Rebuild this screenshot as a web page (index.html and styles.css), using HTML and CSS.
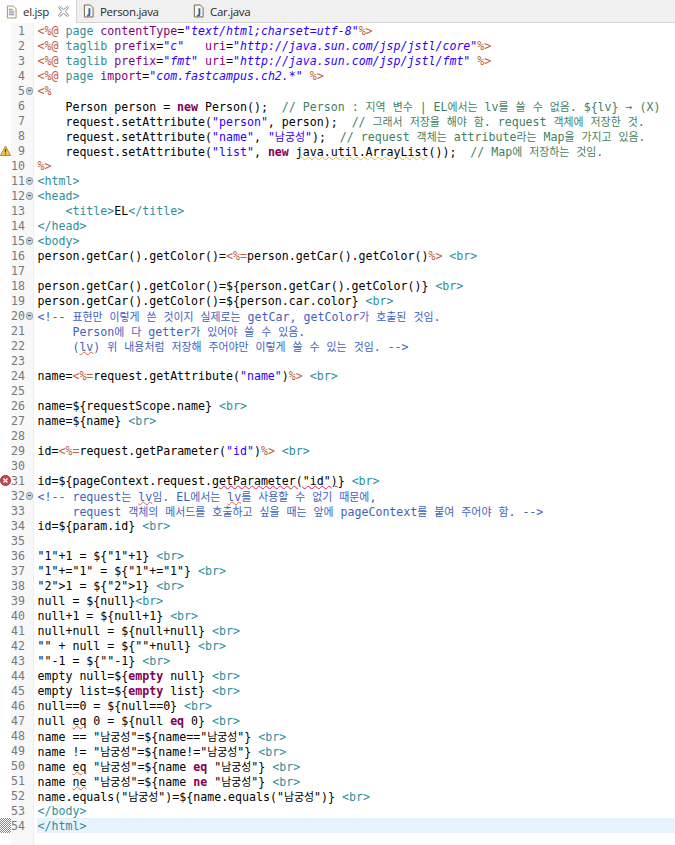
FILE: index.html
```html
<!DOCTYPE html>
<html lang="ko">
<head>
<meta charset="utf-8">
<title>el.jsp</title>
<link rel="stylesheet" href="styles.css">
</head>
<body>
<nav class="tabs">
  <div class="tab active">
    <svg class="ficon" width="11" height="14" viewBox="0 0 12 14"><path d="M1.500 .5h6.500l3 3v10h-9.500z" fill="#fff" stroke="#a58a5c"/><path d="M3 4h4" stroke="#5a7fb5"/><path d="M3 6h6" stroke="#d0694a"/><path d="M3 8h6" stroke="#4f9c6b"/><path d="M3 10h6" stroke="#8a6bb5"/></svg>
    <span class="tname">el.jsp</span>
    <svg class="close" width="11" height="11" viewBox="0 0 11 11"><path d="M1.500 .5l4 3 4-3 1 1-3 4 3 4-1 1-4-3-4 3-1-1 3-4-3-4z" fill="#fff" stroke="#8a8a8a"/></svg>
  </div>
  <div class="tab">
    <svg class="ficon" width="11" height="14" viewBox="0 0 12 14"><path d="M1.500 .5h6.500l3 3v10h-9.500z" fill="#f8f8f0" stroke="#6a5f45"/><path d="M7 4v6.500q0 1.500-1.500 1.500h-1" fill="none" stroke="#2a5fb0" stroke-width="2"/></svg>
    <span class="tname">Person.java</span>
  </div>
  <div class="tab">
    <svg class="ficon" width="11" height="14" viewBox="0 0 12 14"><path d="M1.500 .5h6.500l3 3v10h-9.500z" fill="#f8f8f0" stroke="#6a5f45"/><path d="M7 4v6.500q0 1.500-1.500 1.500h-1" fill="none" stroke="#2a5fb0" stroke-width="2"/></svg>
    <span class="tname">Car.java</span>
  </div>
</nav>
<main class="editor">
<div class="row"><i class="mark"></i><i class="num">1</i><i class="fcol"></i><code class="code"><span class="j">&lt;%@</span> <span class="t">page</span> <span class="a">contentType</span>=<span class="s">"text/html;charset=utf-8"</span><span class="j">%&gt;</span></code></div>
<div class="row"><i class="mark"></i><i class="num">2</i><i class="fcol"></i><code class="code"><span class="j">&lt;%@</span> <span class="t">taglib</span> <span class="a">prefix</span>=<span class="s">"c"</span>   <span class="a">uri</span>=<span class="s">"http://java.sun.com/jsp/jstl/core"</span><span class="j">%&gt;</span></code></div>
<div class="row"><i class="mark"></i><i class="num">3</i><i class="fcol"></i><code class="code"><span class="j">&lt;%@</span> <span class="t">taglib</span> <span class="a">prefix</span>=<span class="s">"fmt"</span> <span class="a">uri</span>=<span class="s">"http://java.sun.com/jsp/jstl/fmt"</span> <span class="j">%&gt;</span></code></div>
<div class="row"><i class="mark"></i><i class="num">4</i><i class="fcol"></i><code class="code"><span class="j">&lt;%@</span> <span class="t">page</span> <span class="a">import</span>=<span class="s">"com.fastcampus.ch2.*"</span> <span class="j">%&gt;</span></code></div>
<div class="row"><i class="mark"></i><i class="num">5</i><i class="fcol"><b class="fold"></b></i><code class="code"><span class="j">&lt;%</span></code></div>
<div class="row"><i class="mark"></i><i class="num">6</i><i class="fcol"></i><code class="code">    Person person = <span class="k">new</span> Person();  <span class="c">// Person : <span class="q">지역</span> <span class="q">변수</span> | EL<span class="q">에서는</span> lv<span class="q">를</span> <span class="q">쓸</span> <span class="q">수</span> <span class="q">없음</span>. ${lv} → (X)</span></code></div>
<div class="row"><i class="mark"></i><i class="num">7</i><i class="fcol"></i><code class="code">    request.setAttribute(<span class="str">"person"</span>, person);  <span class="c">// <span class="q">그래서</span> <span class="q">저장을</span> <span class="q">해야</span> <span class="q">함</span>. request <span class="q">객체에</span> <span class="q">저장한</span> <span class="q">것</span>.</span></code></div>
<div class="row"><i class="mark"></i><i class="num">8</i><i class="fcol"></i><code class="code">    request.setAttribute(<span class="str">"name"</span>, <span class="str">"<span class="q">남궁성</span>"</span>);  <span class="c">// request <span class="q">객체는</span> attribute<span class="q">라는</span> Map<span class="q">을</span> <span class="q">가지고</span> <span class="q">있음</span>.</span></code></div>
<div class="row"><i class="mark"><svg width="11" height="12" viewBox="0 0 11 12"><path d="M5.500 1L10.500 10.500H.5z" fill="#f2c94f" stroke="#b08a30" stroke-linejoin="round"/><path d="M5.500 4v3.500M5.500 8.500v1" stroke="#5a4510" stroke-width="1.300"/></svg></i><i class="num">9</i><i class="fcol"></i><code class="code">    request.setAttribute(<span class="str">"list"</span>, <span class="k">new</span> <span class="warn">java.util.ArrayList</span>());  <span class="c">// Map<span class="q">에</span> <span class="q">저장하는</span> <span class="q">것임</span>.</span></code></div>
<div class="row"><i class="mark"></i><i class="num">10</i><i class="fcol"></i><code class="code"><span class="j">%&gt;</span></code></div>
<div class="row"><i class="mark"></i><i class="num">11</i><i class="fcol"><b class="fold"></b></i><code class="code"><span class="t">&lt;html&gt;</span></code></div>
<div class="row"><i class="mark"></i><i class="num">12</i><i class="fcol"><b class="fold"></b></i><code class="code"><span class="t">&lt;head&gt;</span></code></div>
<div class="row"><i class="mark"></i><i class="num">13</i><i class="fcol"></i><code class="code">    <span class="t">&lt;title&gt;</span>EL<span class="t">&lt;/title&gt;</span></code></div>
<div class="row"><i class="mark"></i><i class="num">14</i><i class="fcol"></i><code class="code"><span class="t">&lt;/head&gt;</span></code></div>
<div class="row"><i class="mark"></i><i class="num">15</i><i class="fcol"><b class="fold"></b></i><code class="code"><span class="t">&lt;body&gt;</span></code></div>
<div class="row"><i class="mark"></i><i class="num">16</i><i class="fcol"></i><code class="code">person.getCar().getColor()=<span class="j">&lt;%=</span>person.getCar().getColor()<span class="j">%&gt;</span> <span class="t">&lt;br&gt;</span></code></div>
<div class="row"><i class="mark"></i><i class="num">17</i><i class="fcol"></i><code class="code"></code></div>
<div class="row"><i class="mark"></i><i class="num">18</i><i class="fcol"></i><code class="code">person.getCar().getColor()=${person.getCar().getColor()} <span class="t">&lt;br&gt;</span></code></div>
<div class="row"><i class="mark"></i><i class="num">19</i><i class="fcol"></i><code class="code">person.getCar().getColor()=${person.car.color} <span class="t">&lt;br&gt;</span></code></div>
<div class="row"><i class="mark"></i><i class="num">20</i><i class="fcol"><b class="fold"></b></i><code class="code h">&lt;!-- <span class="q">표현만</span> <span class="q">이렇게</span> <span class="q">쓴</span> <span class="q">것이지</span> <span class="q">실제로는</span> getCar, getColor<span class="q">가</span> <span class="q">호출된</span> <span class="q">것임</span>.</code></div>
<div class="row"><i class="mark"></i><i class="num">21</i><i class="fcol"></i><code class="code h">     Person<span class="q">에</span> <span class="q">다</span> getter<span class="q">가</span> <span class="q">있어야</span> <span class="q">쓸</span> <span class="q">수</span> <span class="q">있음</span>.</code></div>
<div class="row"><i class="mark"></i><i class="num">22</i><i class="fcol"></i><code class="code h">     (<span class="sp">lv</span>) <span class="q">위</span> <span class="q">내용처럼</span> <span class="q">저장해</span> <span class="q">주어야만</span> <span class="q">이렇게</span> <span class="q">쓸</span> <span class="q">수</span> <span class="q">있는</span> <span class="q">것임</span>. --&gt;</code></div>
<div class="row"><i class="mark"></i><i class="num">23</i><i class="fcol"></i><code class="code"></code></div>
<div class="row"><i class="mark"></i><i class="num">24</i><i class="fcol"></i><code class="code">name=<span class="j">&lt;%=</span>request.getAttribute(<span class="str">"name"</span>)<span class="j">%&gt;</span> <span class="t">&lt;br&gt;</span></code></div>
<div class="row"><i class="mark"></i><i class="num">25</i><i class="fcol"></i><code class="code"></code></div>
<div class="row"><i class="mark"></i><i class="num">26</i><i class="fcol"></i><code class="code">name=${requestScope.name} <span class="t">&lt;br&gt;</span></code></div>
<div class="row"><i class="mark"></i><i class="num">27</i><i class="fcol"></i><code class="code">name=${name} <span class="t">&lt;br&gt;</span></code></div>
<div class="row"><i class="mark"></i><i class="num">28</i><i class="fcol"></i><code class="code"></code></div>
<div class="row"><i class="mark"></i><i class="num">29</i><i class="fcol"></i><code class="code">id=<span class="j">&lt;%=</span>request.getParameter(<span class="str">"id"</span>)<span class="j">%&gt;</span> <span class="t">&lt;br&gt;</span></code></div>
<div class="row"><i class="mark"></i><i class="num">30</i><i class="fcol"></i><code class="code"></code></div>
<div class="row"><i class="mark"><svg width="11" height="11" viewBox="0 0 11 11"><circle cx="5.500" cy="5.500" r="5" fill="#c9434a" stroke="#a83239"/><path d="M3.500 3.500l4 4M7.500 3.500l-4 4" stroke="#fff" stroke-width="1.500"/></svg></i><i class="num">31</i><i class="fcol"></i><code class="code">id=${pageContext.request.<span class="err">getParameter("id")</span>} <span class="t">&lt;br&gt;</span></code></div>
<div class="row"><i class="mark"></i><i class="num">32</i><i class="fcol"><b class="fold"></b></i><code class="code h">&lt;!-- request<span class="q">는</span> <span class="sp">lv</span><span class="q">임</span>. EL<span class="q">에서는</span> <span class="sp">lv</span><span class="q">를</span> <span class="q">사용할</span> <span class="q">수</span> <span class="q">없기</span> <span class="q">때문에</span>,</code></div>
<div class="row"><i class="mark"></i><i class="num">33</i><i class="fcol"></i><code class="code h">     request <span class="q">객체의</span> <span class="q">메서드를</span> <span class="q">호출하고</span> <span class="q">싶을</span> <span class="q">때는</span> <span class="q">앞에</span> pageContext<span class="q">를</span> <span class="q">붙여</span> <span class="q">주어야</span> <span class="q">함</span>. --&gt;</code></div>
<div class="row"><i class="mark"></i><i class="num">34</i><i class="fcol"></i><code class="code">id=${param.id} <span class="t">&lt;br&gt;</span></code></div>
<div class="row"><i class="mark"></i><i class="num">35</i><i class="fcol"></i><code class="code"></code></div>
<div class="row"><i class="mark"></i><i class="num">36</i><i class="fcol"></i><code class="code">"1"+1 = ${"1"+1} <span class="t">&lt;br&gt;</span></code></div>
<div class="row"><i class="mark"></i><i class="num">37</i><i class="fcol"></i><code class="code">"1"+="1" = ${"1"+="1"} <span class="t">&lt;br&gt;</span></code></div>
<div class="row"><i class="mark"></i><i class="num">38</i><i class="fcol"></i><code class="code">"2"&gt;1 = ${"2"&gt;1} <span class="t">&lt;br&gt;</span></code></div>
<div class="row"><i class="mark"></i><i class="num">39</i><i class="fcol"></i><code class="code">null = ${null}<span class="t">&lt;br&gt;</span></code></div>
<div class="row"><i class="mark"></i><i class="num">40</i><i class="fcol"></i><code class="code">null+1 = ${null+1} <span class="t">&lt;br&gt;</span></code></div>
<div class="row"><i class="mark"></i><i class="num">41</i><i class="fcol"></i><code class="code">null+null = ${null+null} <span class="t">&lt;br&gt;</span></code></div>
<div class="row"><i class="mark"></i><i class="num">42</i><i class="fcol"></i><code class="code">"" + null = ${""+null} <span class="t">&lt;br&gt;</span></code></div>
<div class="row"><i class="mark"></i><i class="num">43</i><i class="fcol"></i><code class="code">""-1 = ${""-1} <span class="t">&lt;br&gt;</span></code></div>
<div class="row"><i class="mark"></i><i class="num">44</i><i class="fcol"></i><code class="code">empty null=${<span class="k">empty</span> null} <span class="t">&lt;br&gt;</span></code></div>
<div class="row"><i class="mark"></i><i class="num">45</i><i class="fcol"></i><code class="code">empty list=${<span class="k">empty</span> list} <span class="t">&lt;br&gt;</span></code></div>
<div class="row"><i class="mark"></i><i class="num">46</i><i class="fcol"></i><code class="code">null==0 = ${null==0} <span class="t">&lt;br&gt;</span></code></div>
<div class="row"><i class="mark"></i><i class="num">47</i><i class="fcol"></i><code class="code">null <span class="sp">eq</span> 0 = ${null <span class="k">eq</span> 0} <span class="t">&lt;br&gt;</span></code></div>
<div class="row"><i class="mark"></i><i class="num">48</i><i class="fcol"></i><code class="code">name == "<span class="q">남궁성</span>"=${name=="<span class="q">남궁성</span>"} <span class="t">&lt;br&gt;</span></code></div>
<div class="row"><i class="mark"></i><i class="num">49</i><i class="fcol"></i><code class="code">name != "<span class="q">남궁성</span>"=${name!="<span class="q">남궁성</span>"} <span class="t">&lt;br&gt;</span></code></div>
<div class="row"><i class="mark"></i><i class="num">50</i><i class="fcol"></i><code class="code">name <span class="sp">eq</span> "<span class="q">남궁성</span>"=${name <span class="k">eq</span> "<span class="q">남궁성</span>"} <span class="t">&lt;br&gt;</span></code></div>
<div class="row"><i class="mark"></i><i class="num">51</i><i class="fcol"></i><code class="code">name <span class="sp">ne</span> "<span class="q">남궁성</span>"=${name <span class="k">ne</span> "<span class="q">남궁성</span>"} <span class="t">&lt;br&gt;</span></code></div>
<div class="row"><i class="mark"></i><i class="num">52</i><i class="fcol"></i><code class="code">name.equals("<span class="q">남궁성</span>")=${name.equals("<span class="q">남궁성</span>")} <span class="t">&lt;br&gt;</span></code></div>
<div class="row"><i class="mark"></i><i class="num">53</i><i class="fcol"></i><code class="code"><span class="t">&lt;/body&gt;</span></code></div>
<div class="row current"><i class="mark dither"></i><i class="num">54</i><i class="fcol"></i><code class="code"><span class="t">&lt;/html&gt;</span></code></div>
<div class="row filler"><i class="mark"></i><i class="num"></i><i class="fcol"></i><code class="code"></code></div>
</main>
</body>
</html>
```

FILE: styles.css
```css
* { box-sizing: border-box; }
html, body { margin: 0; height: 845px; overflow: hidden; background: #fff; }
body { display: flex; flex-direction: column; }

.tabs {
  display: flex;
  height: 23px;
  flex: none;
  background: #f0f0f0;
  border-bottom: 1px solid #d4d4d4;
  font: 11.5px "Open Sans", "Noto Sans", sans-serif;
  color: #2a2a2a;
}
.tab { display: flex; align-items: center; padding-left: 6px; width: 110px; }
.tab.active {
  width: 77px;
  background: #fff;
  border-right: 1px solid #d4d4d4;
  height: 23px;
}
.ficon { flex: none; margin-right: 6px; }
.close { flex: none; margin-left: 9px; }
.tname { white-space: nowrap; letter-spacing: -0.3px; }

.editor { flex: 1; display: flex; flex-direction: column; min-height: 0; }
.row { display: flex; height: 15px; flex: none; }
.row.filler { flex: 1; }
.mark { width: 11px; flex: none; display: flex; align-items: center; background: #fff; font-style: normal; }
.mark svg { flex: none; }
.dither {
  background-color: #fff;
  background-image: conic-gradient(#5b8fd0 25%, #fff 0 50%, #5b8fd0 0 75%, #fff 0);
  background-size: 2px 2px;
}
.num {
  width: 14px;
  flex: none;
  background: #f8f8f8;
  color: #787878;
  font: 11.6px/17px "DejaVu Sans Mono", monospace;
  display: flex;
  justify-content: flex-end;
  white-space: nowrap;
}
.fcol {
  width: 9px;
  flex: none;
  margin-right: 3px;
  background: #f8f8f8;
  border-right: 1px solid #efefef;
  display: flex;
  align-items: center;
  justify-content: flex-start;
  padding-left: 1px;
}
.fold {
  position: relative;
  width: 8px;
  height: 8px;
  margin-top: 1px;
  border-radius: 50%;
  background: #c9d3dc;
  border: 1px solid #9aa7b3;
}
.fold::after {
  content: "";
  position: absolute;
  left: 1px;
  right: 1px;
  top: 2px;
  height: 1px;
  background: #44576a;
}
.code {
  flex: 1;
  min-width: 0;
  padding-left: 0.500px;
  color: #000;
  font: 11.6px/17px "DejaVu Sans Mono", monospace;
  white-space: pre;
}
.current .code { background: #e8f2fe; }

.j { color: #bf5f3f; }
.t { color: #2e8f9a; }
.a { color: #7f007f; }
.s { color: #2a00ff; font-style: italic; }
.str { color: #2a00ff; }
.k { color: #7f0055; font-weight: bold; }
.c { color: #3f7f5f; }
.h { color: #3f5fbf; }
.q { font: 10.900px/17px "Noto Sans CJK KR", sans-serif; }
.sp { text-decoration: underline wavy #e0603a 1px; text-underline-offset: 0; }
.warn { text-decoration: underline wavy #f0c030 1px; text-underline-offset: 0; }
.err { text-decoration: underline wavy #e0205a 1px; text-underline-offset: 0; }
```
